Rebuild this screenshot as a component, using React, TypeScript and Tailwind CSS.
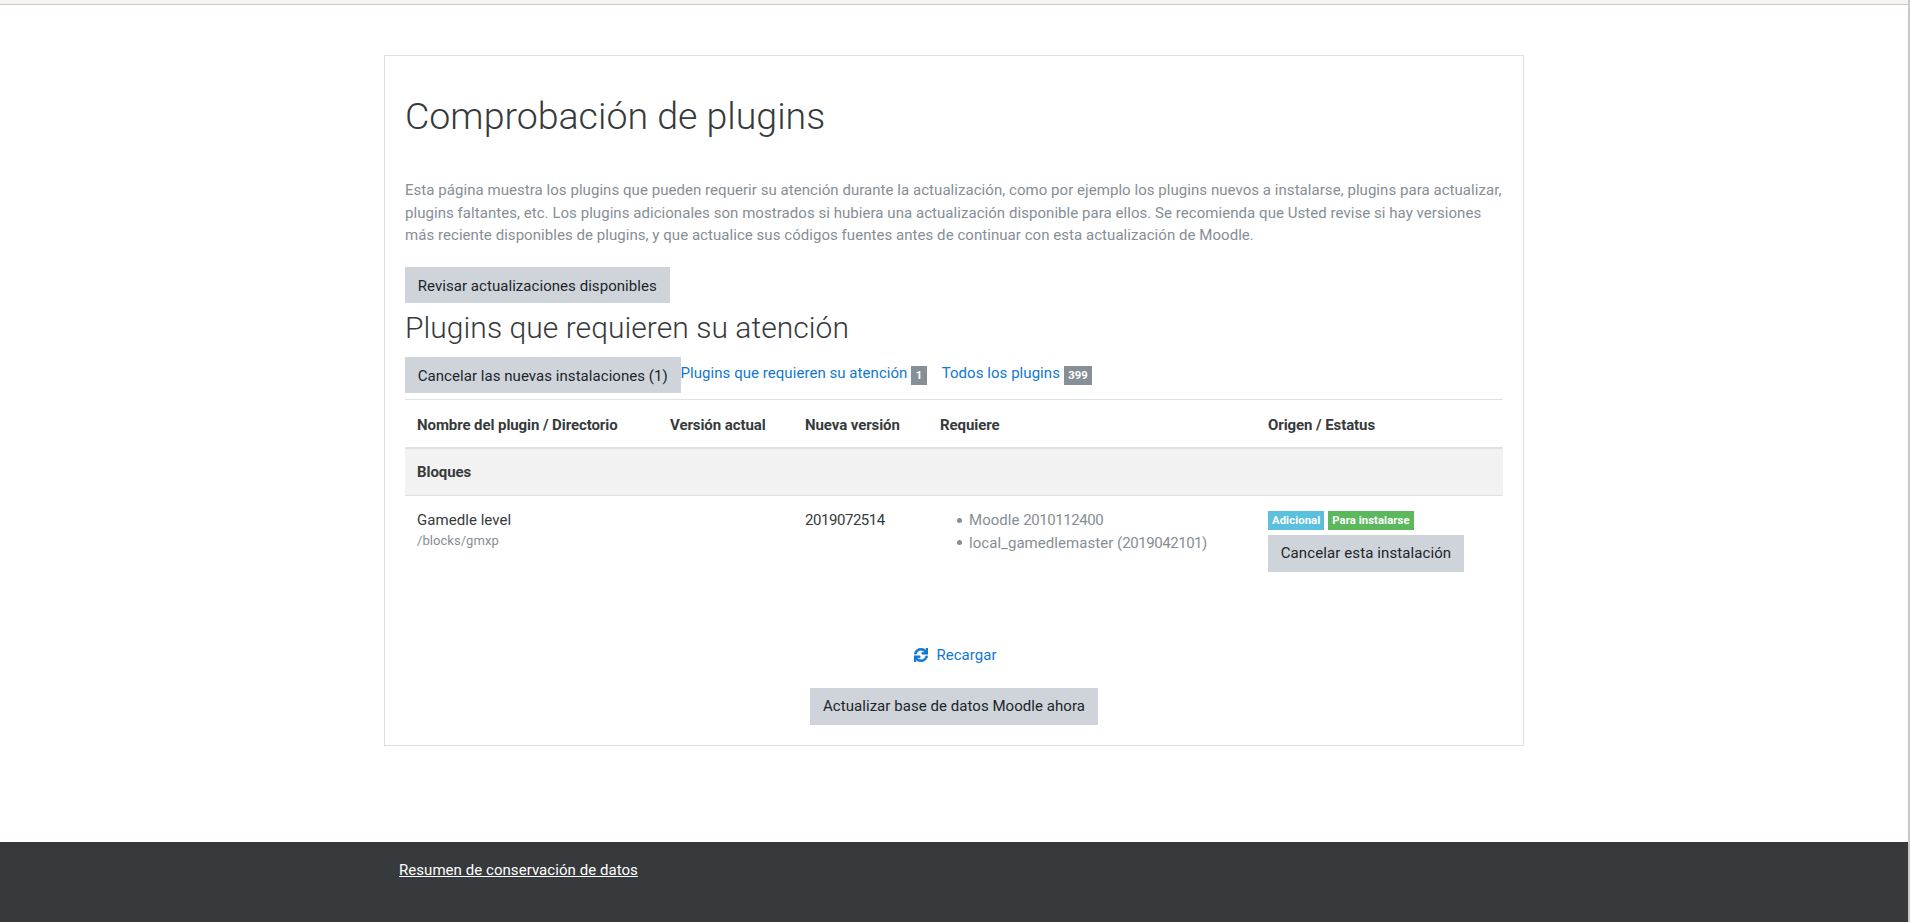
import { FaSync } from 'react-icons/fa';

const btn = 'inline-block bg-[#ced4da] text-[#212529] px-[12.75px] py-[7px] text-[15px] leading-[22.5px]';
const link = 'text-[#1177d1]';
const digits = 'tracking-[-0.45px]';

function Badge({ color, children }: { color: string; children: React.ReactNode }) {
  return (
    <span className={`inline-block ${color} text-white text-[11.25px] font-bold leading-[11.25px] px-[4px] py-[4px] mr-[4px] tracking-[0.1px]`}>
      {children}
    </span>
  );
}

function Req({ children }: { children: React.ReactNode }) {
  return (
    <li className="flex items-center gap-[7px]">
      <span className="w-[5px] h-[5px] rounded-full bg-[#868e96]" />
      <span>{children}</span>
    </li>
  );
}

export default function App() {
  return (
    <div className="min-h-[922px] flex flex-col bg-white font-['Roboto',sans-serif] text-[15px] leading-[22.5px] tracking-[0.05px] text-[#373a3c] border-r-2 border-[#cdc8c1]">
      <div className="h-[5px] bg-[#f6f4ef] border-b border-[#cdc8c1]" />
      <main className="flex-1 pt-[50px]">
        <div className="w-[1140px] ml-[384px] border border-[#dfdfdf] px-5 pt-[38px] pb-5">
          <h2 className="text-[37.5px] leading-[45px] font-light tracking-normal text-[#373a3c] mb-[40px]">Comprobación de plugins</h2>
          <p className="text-[#868e96] mb-[20px]">
            Esta página muestra los plugins que pueden requerir su atención durante la actualización, como por ejemplo los plugins nuevos a instalarse, plugins para actualizar, plugins faltantes, etc. Los plugins adicionales son mostrados si hubiera una actualización disponible para ellos. Se recomienda que Usted revise si hay versiones más reciente disponibles de plugins, y que actualice sus códigos fuentes antes de continuar con esta actualización de Moodle.
          </p>
          <a className={`${btn} pt-[8px] pb-[6px]`}>Revisar actualizaciones disponibles</a>
          <h3 className="text-[30px] leading-[36px] font-light mt-[7px] mb-[10.5px]">Plugins que requieren su atención</h3>
          <div className="flex items-start">
            <a className={`${btn} pt-[8px] pb-[6px]`}>Cancelar las nuevas instalaciones (1)</a>
            <a className={`${link} mt-[5px]`}>
              Plugins que requieren su atención{' '}
              <span className="inline-block bg-[#868e96] text-white text-[11.25px] font-bold leading-[11.25px] px-[4.5px] py-[4px] align-[-1px]">1</span>
            </a>
            <a className={`${link} mt-[5px] ml-[15px]`}>
              Todos los plugins{' '}
              <span className="inline-block bg-[#868e96] text-white text-[11.25px] font-bold leading-[11.25px] px-[4.5px] py-[4px] align-[-1px]">399</span>
            </a>
          </div>
          <table className="w-full table-fixed mt-[6px] border-collapse text-left text-[#373a3c]">
            <colgroup>
              <col className="w-[253px]" />
              <col className="w-[135px]" />
              <col className="w-[135px]" />
              <col className="w-[328px]" />
              <col />
            </colgroup>
            <thead className="tracking-[-0.08px]">
              <tr className="border-t border-b-2 border-[#dee2e6]">
                <th className="px-3 pt-[14px] pb-[10px] font-bold h-[47px]">Nombre del plugin / Directorio</th>
                <th className="px-3 pt-[14px] pb-[10px] font-bold">Versión actual</th>
                <th className="px-3 pt-[14px] pb-[10px] font-bold">Nueva versión</th>
                <th className="px-3 pt-[14px] pb-[10px] font-bold">Requiere</th>
                <th className="px-3 pt-[14px] pb-[10px] font-bold">Origen / Estatus</th>
              </tr>
            </thead>
            <tbody>
              <tr className="bg-[#f2f2f2] border-b border-[#dee2e6]">
                <th colSpan={5} className="p-3 font-bold h-[48px] tracking-[-0.08px]">Bloques</th>
              </tr>
              <tr>
                <td className="px-3 pt-[13px] align-top">
                  <div>Gamedle level</div>
                  <div className="text-[13px] leading-[18.5px] text-[#868e96]">/blocks/gmxp</div>
                </td>
                <td className="p-3 align-top" />
                <td className={`px-3 pt-[13px] align-top ${digits}`}>2019072514</td>
                <td className="px-3 pt-[13px] align-top text-[#868e96]">
                  <ul className="pl-[17px]">
                    <Req>Moodle <span className={digits}>2010112400</span></Req>
                    <Req>local_gamedlemaster (<span className={digits}>2019042101</span>)</Req>
                  </ul>
                </td>
                <td className="p-3 align-top">
                  <div className="flex mt-[3px]">
                    <Badge color="bg-[#5bc0de]">Adicional</Badge>
                    <Badge color="bg-[#5cb85c]">Para instalarse</Badge>
                  </div>
                  <a className={`${btn} mt-[5px] tracking-[0.1px]`}>Cancelar esta instalación</a>
                </td>
              </tr>
            </tbody>
          </table>
          <div className="mt-[60px] flex justify-center">
            <a className={`${link} flex items-center gap-[8px] pl-[3px]`}>
              <FaSync size={14} className="stroke-current stroke-[24]" />
              Recargar
            </a>
          </div>
          <div className="mt-[22px] flex justify-center">
            <a className={btn}>Actualizar base de datos Moodle ahora</a>
          </div>
        </div>
      </main>
      <footer className="h-[80px] bg-[#373a3c] pl-[399px] pt-[17px] text-white">
        <a className="underline">Resumen de conservación de datos</a>
      </footer>
    </div>
  );
}
